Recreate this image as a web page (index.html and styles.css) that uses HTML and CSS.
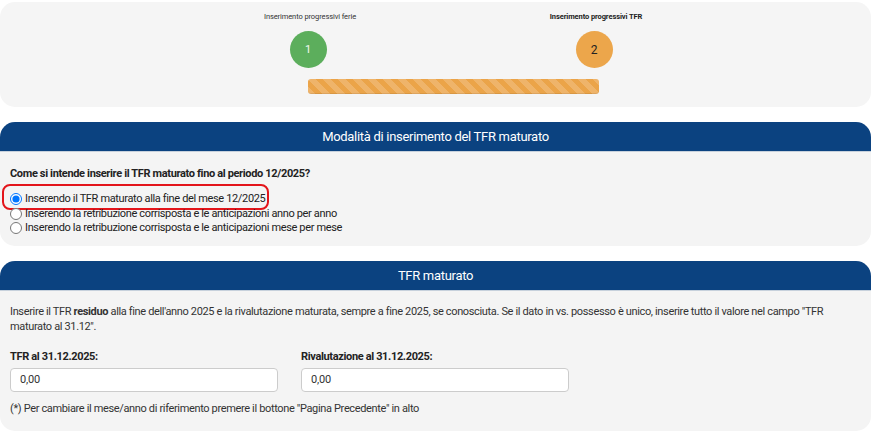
FILE: index.html
```html
<!DOCTYPE html>
<html lang="it">
<head>
<meta charset="utf-8">
<title>TFR maturato</title>
<link rel="stylesheet" href="styles.css">
</head>
<body>
<div class="stepper-card">
  <div class="steps">
    <div class="step">
      <div class="step-label">Inserimento progressivi ferie</div>
      <div class="step-circle done">1</div>
    </div>
    <div class="step">
      <div class="step-label active">Inserimento progressivi TFR</div>
      <div class="step-circle current">2</div>
    </div>
    <div class="progress"></div>
  </div>
</div>

<section class="panel">
  <div class="panel-head">Modalità di inserimento del TFR maturato</div>
  <div class="panel-body">
    <div class="question">Come si intende inserire il TFR maturato fino al periodo 12/2025?</div>
    <label class="option highlighted"><input type="radio" name="mod" checked> Inserendo il TFR maturato alla fine del mese 12/2025</label>
    <label class="option"><input type="radio" name="mod"> Inserendo la retribuzione corrisposta e le anticipazioni anno per anno</label>
    <label class="option"><input type="radio" name="mod"> Inserendo la retribuzione corrisposta e le anticipazioni mese per mese</label>
  </div>
</section>

<section class="panel">
  <div class="panel-head">TFR maturato</div>
  <div class="panel-body body-tfr">
    <p class="intro">Inserire il TFR <b>residuo</b> alla fine dell'anno 2025 e la rivalutazione maturata, sempre a fine 2025, se conosciuta. Se il dato in vs. possesso è unico, inserire tutto il valore nel campo "TFR maturato al 31.12".</p>
    <div class="fields">
      <div class="field">
        <label class="field-label">TFR al 31.12.2025:</label>
        <input class="field-input" type="text" value="0,00">
      </div>
      <div class="field">
        <label class="field-label">Rivalutazione al 31.12.2025:</label>
        <input class="field-input" type="text" value="0,00">
      </div>
    </div>
    <p class="note">(*) Per cambiare il mese/anno di riferimento premere il bottone "Pagina Precedente" in alto</p>
  </div>
</section>
</body>
</html>
```

FILE: styles.css
```css
html, body {
  margin: 0;
  padding: 0;
  background: #ffffff;
}
body {
  font-family: Roboto, "Liberation Sans", Arial, sans-serif;
  font-size: 11px;
  letter-spacing: -0.35px;
  color: #222222;
  padding-top: 2px;
}

.stepper-card {
  background: #f5f5f5;
  border-radius: 15px;
  height: 105px;
  margin-right: 1px;
  box-sizing: border-box;
  padding-top: 10px;
}
.steps {
  width: 572px;
  margin-left: 165px;
  display: grid;
  grid-template-columns: 286px 286px;
}
.step {
  display: flex;
  flex-direction: column;
  align-items: center;
}
.step-label {
  font-size: 7.5px;
  letter-spacing: -0.1px;
  line-height: 10px;
  color: #333;
  height: 10px;
  padding-left: 4px;
}
.step-label.active {
  font-weight: bold;
  color: #222;
}
.step-circle {
  margin-top: 9px;
  width: 37px;
  height: 37px;
  border-radius: 50%;
  display: flex;
  align-items: center;
  justify-content: center;
  font-size: 11px;
  letter-spacing: 0;
}
.step-circle.done {
  background: #5cae5c;
  color: #f2f8f2;
}
.step-circle.current {
  background: #eca64b;
  color: #222;
  font-size: 12px;
}
.progress {
  grid-column: 1 / 3;
  margin-left: 143px;
  margin-top: 11px;
  width: 291px;
  height: 15px;
  border-radius: 3px;
  background-color: #eba449;
  background-image: linear-gradient(45deg, rgba(255,255,255,.18) 25%, transparent 25%, transparent 50%, rgba(255,255,255,.18) 50%, rgba(255,255,255,.18) 75%, transparent 75%, transparent);
  background-size: 15px 15px;
  box-shadow: inset 0 -1px 0 rgba(0,0,0,.08);
}

.panel {
  margin-top: 15px;
  margin-right: 1px;
  border-radius: 15px;
  overflow: hidden;
  background: #f4f4f4;
}
.panel-head {
  background: #0b4280;
  color: #ffffff;
  text-align: center;
  font-size: 13px;
  letter-spacing: -0.3px;
  height: 29px;
  line-height: 29px;
  border-bottom: 1px solid #c7d1dc;
}
.panel-body {
  padding: 14px 10px 10px;
}
.question {
  font-weight: bold;
  line-height: 15px;
  margin-bottom: 11px;
}
.option {
  display: flex;
  align-items: center;
  height: 14.5px;
  line-height: 14.5px;
  position: relative;
}
.option input {
  margin: 0 3px 0 0;
  width: 12px;
  height: 12px;
}
.highlighted::after {
  content: "";
  position: absolute;
  left: -8px;
  top: -8px;
  width: 263px;
  height: 22px;
  border: 2px solid #e3151b;
  border-radius: 8px;
  pointer-events: none;
}

.body-tfr {
  padding: 13px 10px 15px;
}
.intro {
  margin: 0;
  line-height: 15px;
  color: #333;
}
.fields {
  margin-top: 15px;
  display: grid;
  grid-template-columns: 268px 268px;
  column-gap: 23px;
}
.field-label {
  display: block;
  font-weight: bold;
  line-height: 15px;
  margin-bottom: 4px;
}
.field-input {
  box-sizing: border-box;
  width: 268px;
  height: 24px;
  border: 1px solid #cccccc;
  border-radius: 4px;
  background: #ffffff;
  padding: 0 9px;
  font-family: Roboto, "Liberation Sans", Arial, sans-serif;
  font-size: 11px;
  letter-spacing: -0.2px;
  color: #333;
  display: block;
}
.note {
  margin: 9px 0 0;
  line-height: 15px;
  color: #333;
}
```
